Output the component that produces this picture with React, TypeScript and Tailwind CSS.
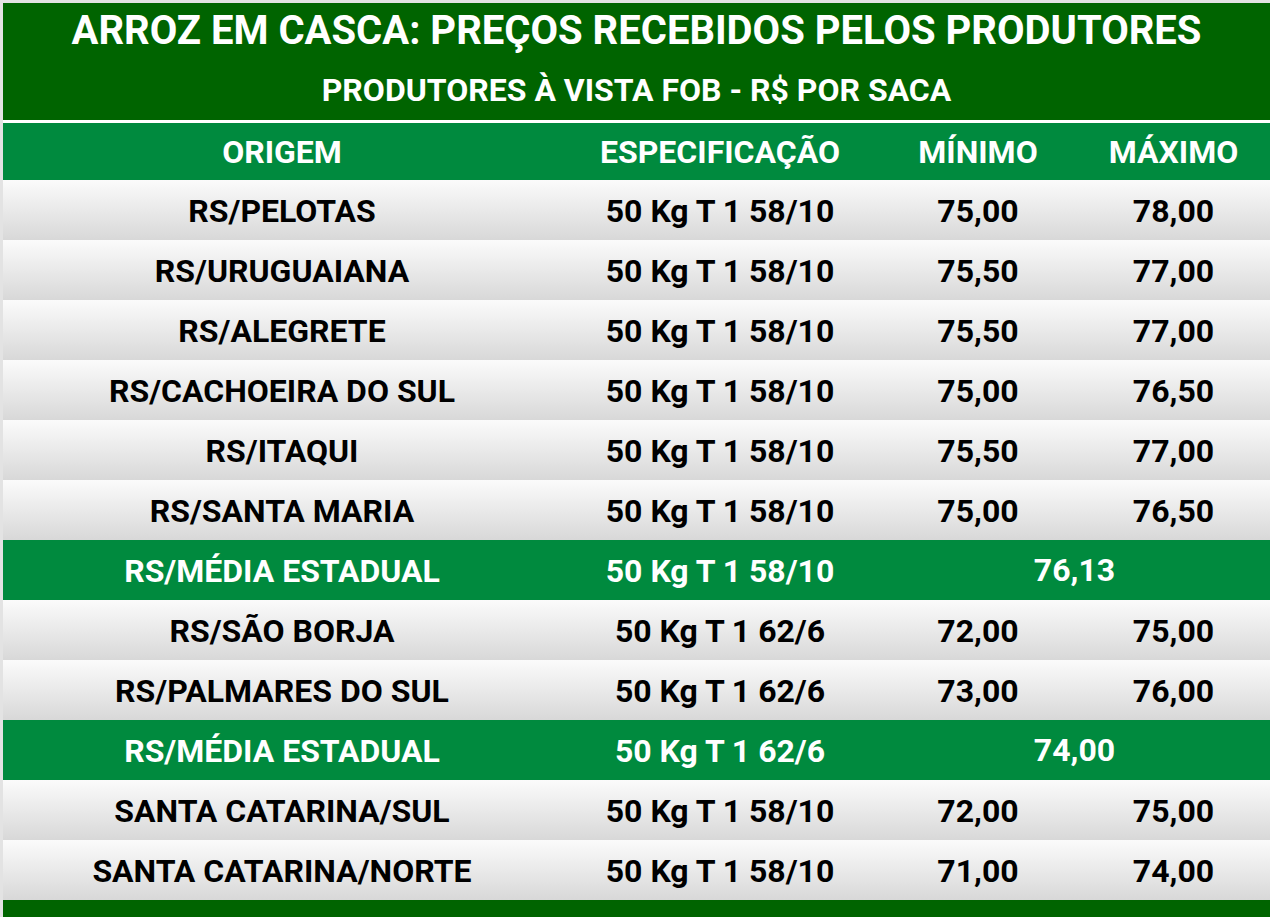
const rows: { origem: string; spec: string; min?: string; max?: string; media?: string }[] = [
  { origem: 'RS/PELOTAS', spec: '50 Kg T 1 58/10', min: '75,00', max: '78,00' },
  { origem: 'RS/URUGUAIANA', spec: '50 Kg T 1 58/10', min: '75,50', max: '77,00' },
  { origem: 'RS/ALEGRETE', spec: '50 Kg T 1 58/10', min: '75,50', max: '77,00' },
  { origem: 'RS/CACHOEIRA DO SUL', spec: '50 Kg T 1 58/10', min: '75,00', max: '76,50' },
  { origem: 'RS/ITAQUI', spec: '50 Kg T 1 58/10', min: '75,50', max: '77,00' },
  { origem: 'RS/SANTA MARIA', spec: '50 Kg T 1 58/10', min: '75,00', max: '76,50' },
  { origem: 'RS/MÉDIA ESTADUAL', spec: '50 Kg T 1 58/10', media: '76,13' },
  { origem: 'RS/SÃO BORJA', spec: '50 Kg T 1 62/6', min: '72,00', max: '75,00' },
  { origem: 'RS/PALMARES DO SUL', spec: '50 Kg T 1 62/6', min: '73,00', max: '76,00' },
  { origem: 'RS/MÉDIA ESTADUAL', spec: '50 Kg T 1 62/6', media: '74,00' },
  { origem: 'SANTA CATARINA/SUL', spec: '50 Kg T 1 58/10', min: '72,00', max: '75,00' },
  { origem: 'SANTA CATARINA/NORTE', spec: '50 Kg T 1 58/10', min: '71,00', max: '74,00' },
];

const cols = 'grid grid-cols-[558px_318px_198px_193px]';

export default function App() {
  return (
    <div className="w-[1270px] h-[917px] overflow-hidden bg-[#e3e3e3] pt-[3px] pl-[3px] font-['Roboto',sans-serif] font-bold">
      {/* Título */}
      <div className="h-[117px] bg-[#006400] text-white flex flex-col items-center">
        <div className="text-[40px] leading-none mt-[8px]">ARROZ EM CASCA: PREÇOS RECEBIDOS PELOS PRODUTORES</div>
        <div className="text-[32px] leading-none mt-[23px]">PRODUTORES À VISTA FOB - R$ POR SACA</div>
      </div>
      <div className="h-[3px] bg-white" />

      {/* Cabeçalho */}
      <div className={`${cols} h-[57px] bg-[#008a3e] text-white text-[32px] items-center text-center`}>
        <div>ORIGEM</div>
        <div>ESPECIFICAÇÃO</div>
        <div>MÍNIMO</div>
        <div>MÁXIMO</div>
      </div>

      {rows.map((r, i) =>
        r.media ? (
          <div key={i} className={`${cols} h-[60px] pt-[2px] bg-[#008a3e] text-white text-[32px] items-center text-center`}>
            <div>{r.origem}</div>
            <div>{r.spec}</div>
            <div className="col-span-2 -mt-[3px]">{r.media}</div>
          </div>
        ) : (
          <div key={i} className={`${cols} h-[60px] pt-[2px] bg-gradient-to-b from-[#fbfbfb] to-[#d8d8d8] text-black text-[32px] items-center text-center`}>
            <div>{r.origem}</div>
            <div>{r.spec}</div>
            <div>{r.min}</div>
            <div>{r.max}</div>
          </div>
        )
      )}
      <div className="h-[20px] bg-[#006400]" />
    </div>
  );
}
